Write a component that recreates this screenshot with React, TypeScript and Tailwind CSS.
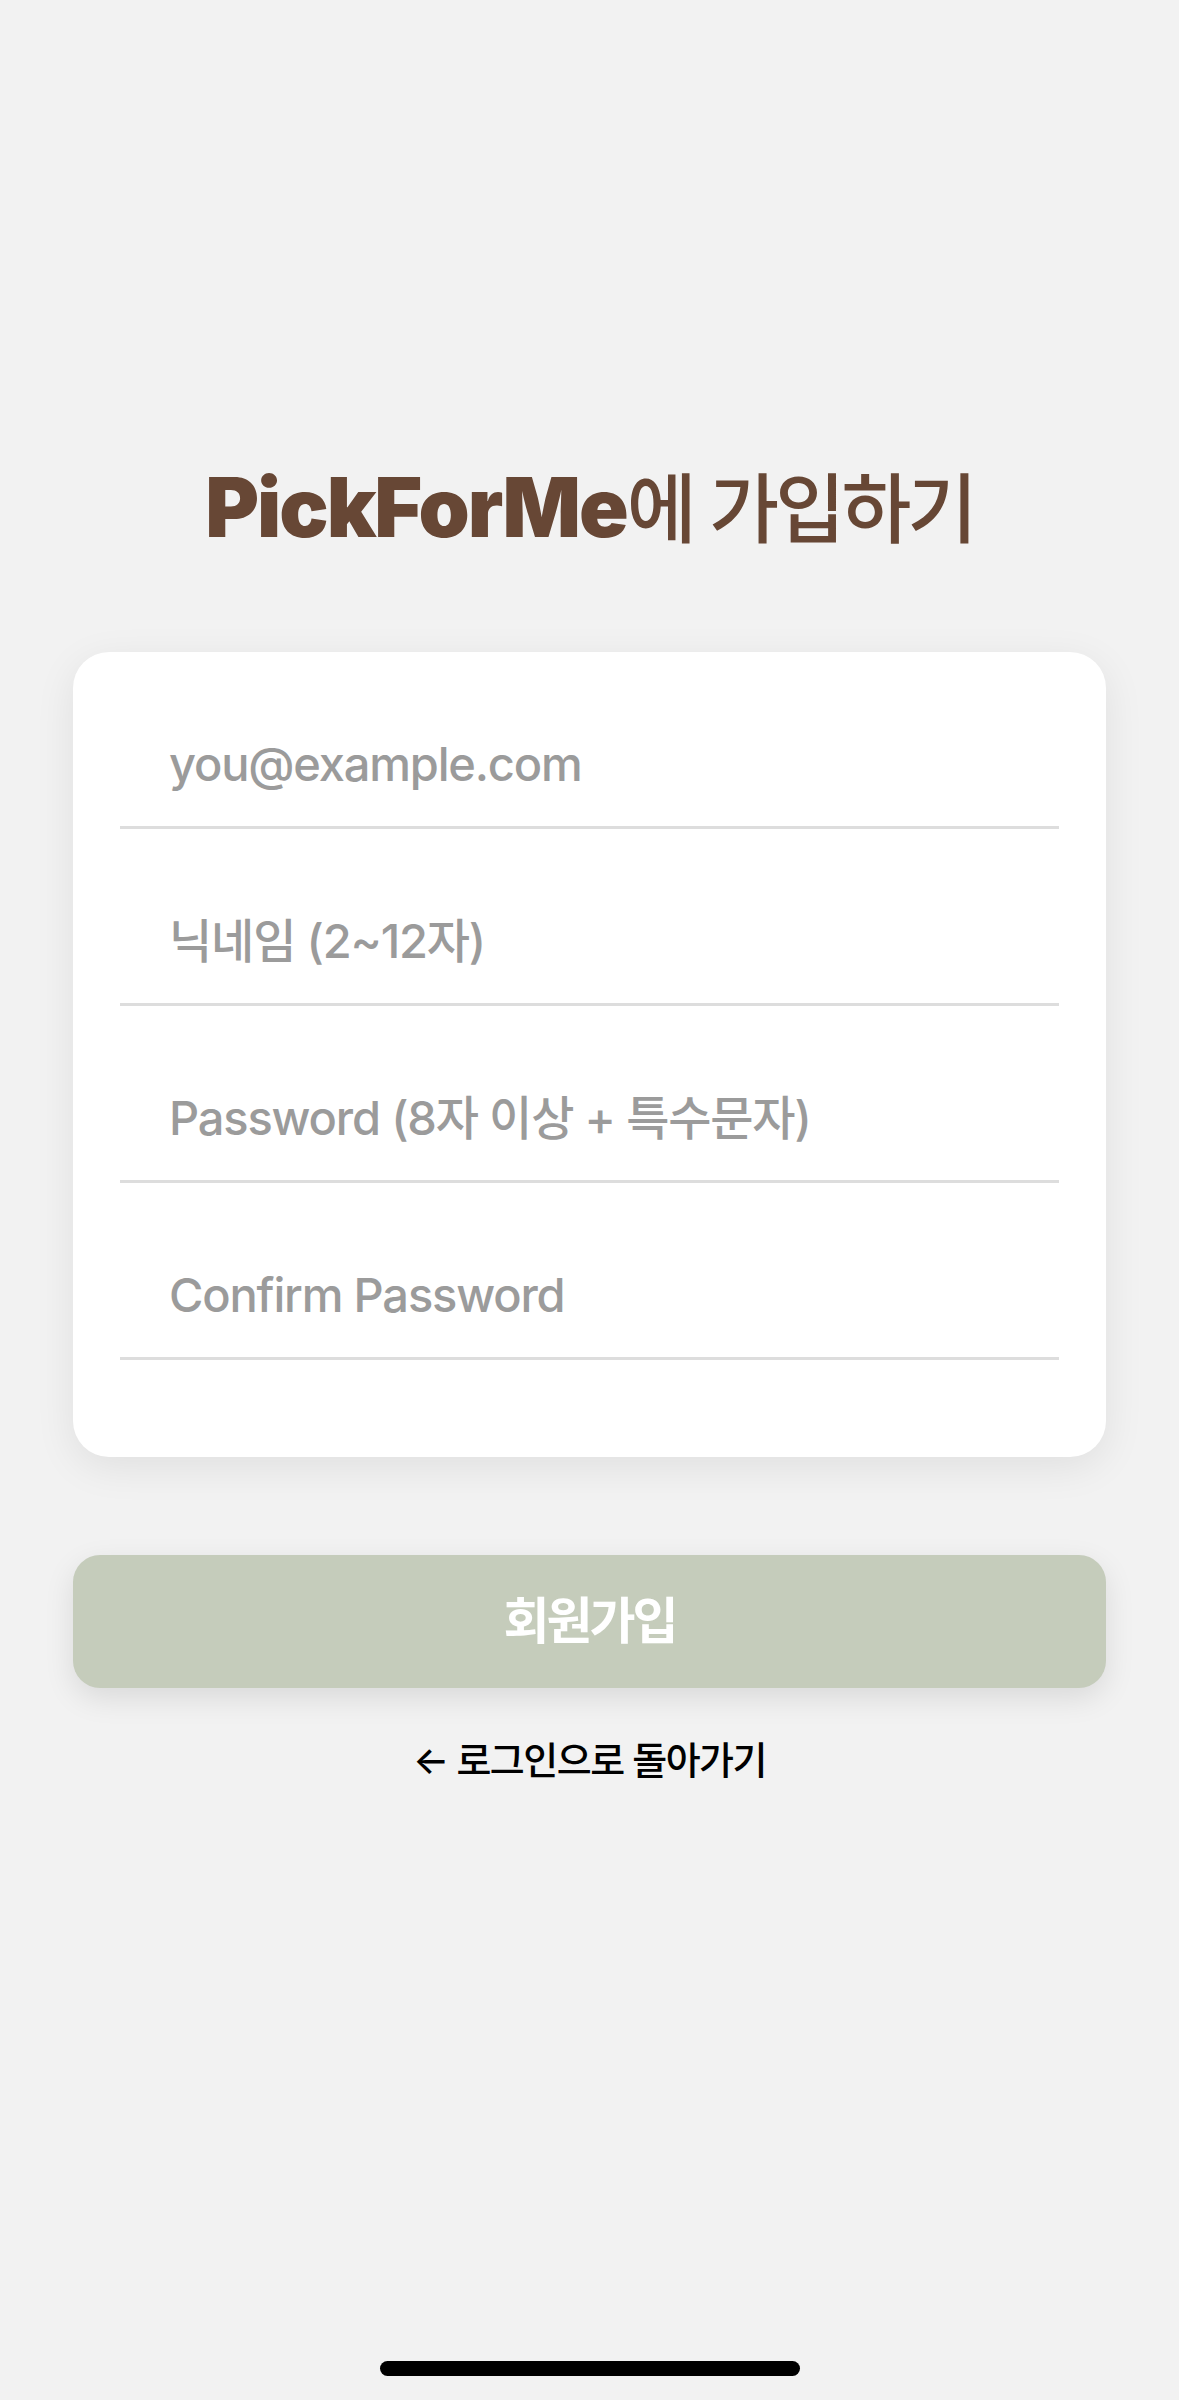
import React from "react";

const fields = [
  { type: "email", placeholder: "you@example.com" },
  { type: "text", placeholder: "닉네임 (2~12자)" },
  { type: "password", placeholder: "Password (8자 이상 + 특수문자)" },
  { type: "password", placeholder: "Confirm Password" },
];

export default function App() {
  return (
    <div className="flex min-h-[2400px] flex-col items-center bg-[#f2f2f2] font-['Inter','Noto_Sans_CJK_KR',sans-serif]">
      <h1 className="mt-[467px] flex items-baseline leading-none text-[#674735]">
        <span className="text-[82px] font-black tracking-[-0.025em]">PickForMe</span>
        <span className="text-[76px] font-medium tracking-[-0.05em]">에 가입하기</span>
      </h1>

      <form className="mt-[103px] w-[1033px] rounded-[36px] bg-white px-[47px] pb-[97px] shadow-[0_10px_40px_rgba(0,0,0,0.08)]">
        {fields.map((f) => (
          <div key={f.placeholder} className="mt-[48px] border-b-[3px] border-[#dddddd]">
            <input
              type={f.type}
              placeholder={f.placeholder}
              className="h-[126px] w-full bg-transparent pl-[49px] text-[47px] font-medium tracking-[-0.025em] text-[#333] outline-none placeholder:text-[#9b9b9b]"
            />
          </div>
        ))}
      </form>

      <button
        type="button"
        className="mt-[98px] flex h-[133px] w-[1033px] items-center justify-center rounded-[27px] bg-[#c5ccbb] text-[50px] font-bold tracking-[-0.06em] text-white shadow-[0_10px_30px_rgba(0,0,0,0.1)]"
      >
        회원가입
      </button>

      <a className="mt-[44px] text-[38px] font-medium tracking-[-0.04em] text-black">
        ← 로그인으로 돌아가기
      </a>

      <div className="mt-auto mb-[24px] h-[15px] w-[420px] rounded-full bg-black" />
    </div>
  );
}
